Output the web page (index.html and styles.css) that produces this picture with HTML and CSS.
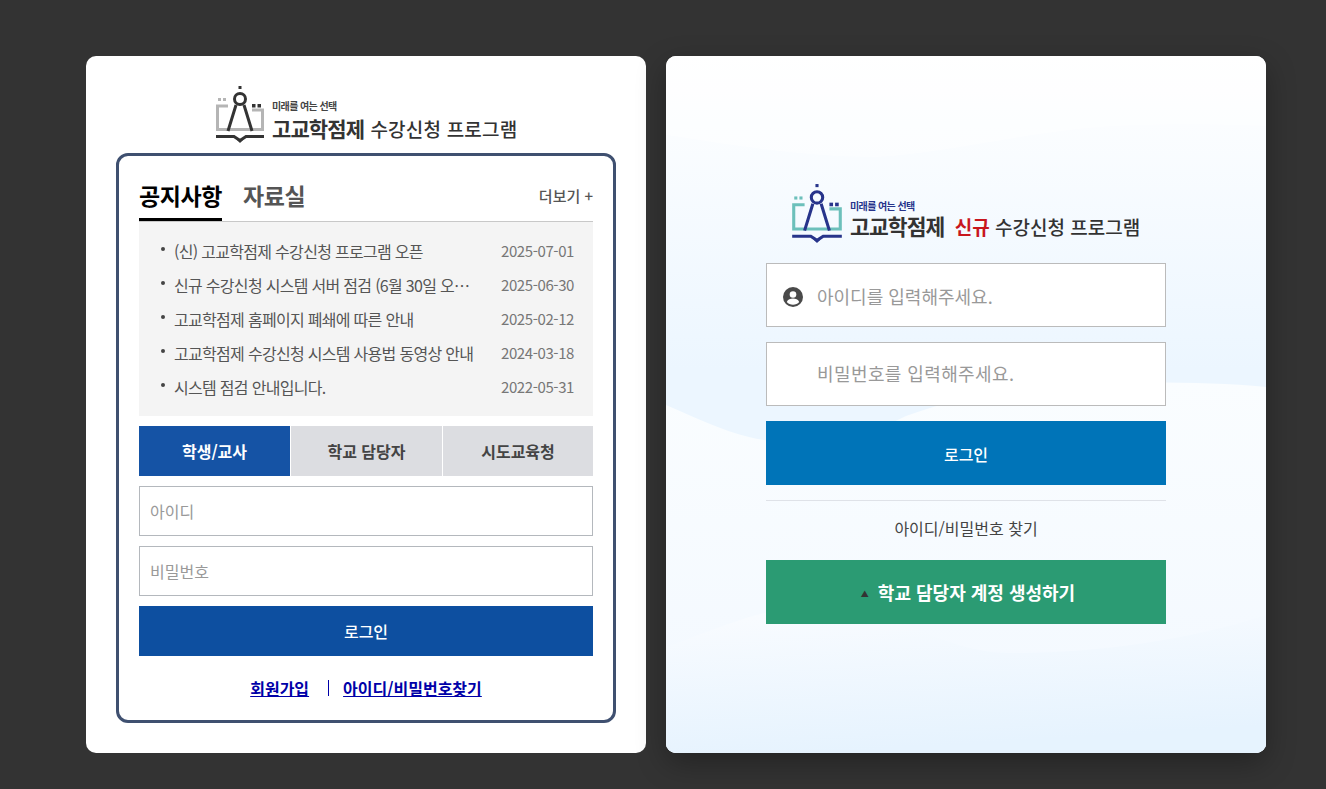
FILE: index.html
```html
<!DOCTYPE html>
<html lang="ko">
<head>
    <meta charset="UTF-8">
    <title>고교학점제 수강신청 프로그램</title>
    <link rel="stylesheet" href="styles.css">
</head>
<body>
    <div class="wrap">
        <div class="card card-left">
            <div class="logo logo-gray">
                <svg class="logo-mark" width="48" height="58" viewBox="0 0 48 58">
                    <g fill="#b5b5b5">
                        <rect x="2" y="13" width="3" height="3"/>
                        <rect x="7" y="13" width="3" height="3"/>
                    </g>
                    <path d="M12 21H1.500V44.500H46.500V25H36" fill="none" stroke="#b5b5b5" stroke-width="3"/>
                    <g fill="#333">
                        <rect x="22.500" y="1" width="3" height="3"/>
                        <rect x="36" y="19" width="3.500" height="3.500"/>
                        <rect x="41.500" y="19" width="3.500" height="3.500"/>
                    </g>
                    <circle cx="24" cy="14" r="5.500" fill="none" stroke="#333" stroke-width="3"/>
                    <path d="M20 20 12 46M28 20 36 46" fill="none" stroke="#333" stroke-width="3"/>
                    <path d="M0 51.500H18L24 55.500L30 51.500H48" fill="none" stroke="#333" stroke-width="3"/>
                    <path d="M20.500 54.500h7L24 58z" fill="#333"/>
                </svg>
                <div class="logo-text">
                    <div class="logo-sub">미래를 여는 선택</div>
                    <div class="logo-main"><b>고교학점제</b> <span>수강신청 프로그램</span></div>
                </div>
            </div>
            <div class="box">
                <div class="tabs">
                    <a class="tab on">공지사항</a>
                    <a class="tab">자료실</a>
                    <a class="more">더보기 +</a>
                </div>
                <ul class="notice">
                    <li><span class="subject">(신) 고교학점제 수강신청 프로그램 오픈</span><span class="date">2025-07-01</span></li>
                    <li><span class="subject">신규 수강신청 시스템 서버 점검 (6월 30일 오…</span><span class="date">2025-06-30</span></li>
                    <li><span class="subject">고교학점제 홈페이지 폐쇄에 따른 안내</span><span class="date">2025-02-12</span></li>
                    <li><span class="subject">고교학점제 수강신청 시스템 사용법 동영상 안내</span><span class="date">2024-03-18</span></li>
                    <li><span class="subject">시스템 점검 안내입니다.</span><span class="date">2022-05-31</span></li>
                </ul>
                <div class="roles">
                    <a class="role on">학생/교사</a>
                    <a class="role">학교 담당자</a>
                    <a class="role">시도교육청</a>
                </div>
                <input class="field" type="text" placeholder="아이디">
                <input class="field" type="password" placeholder="비밀번호">
                <button class="btn-login">로그인</button>
                <div class="links">
                    <a href="#">회원가입</a>
                    <i></i>
                    <a href="#">아이디/비밀번호찾기</a>
                </div>
            </div>
        </div>

        <div class="card card-right">
            <svg class="waves" width="600" height="697" viewBox="0 0 600 697">
                <defs>
                    <linearGradient id="waveBase" x1="0" y1="0" x2="0" y2="1">
                        <stop offset="0" stop-color="#fff"/>
                        <stop offset="0.45" stop-color="#ecf6ff"/>
                    </linearGradient>
                    <linearGradient id="waveMid" x1="0" y1="0" x2="0" y2="1">
                        <stop offset="0" stop-color="#fafdff"/>
                        <stop offset="1" stop-color="#f2f8ff"/>
                    </linearGradient>
                    <linearGradient id="waveLow" x1="0" y1="0" x2="0.25" y2="1">
                        <stop offset="0" stop-color="#fafcff"/>
                        <stop offset="1" stop-color="#e6f3fe"/>
                    </linearGradient>
                </defs>
                <rect width="600" height="697" fill="url(#waveBase)"/>
                <path d="M0 79C70 90 140 101 211 101C300 95 380 70 480 69C530 68 570 69 600 70V0H0z" fill="#fff" fill-opacity="0.4"/>
                <path d="M0 349C30 362 55 374 83 381C130 392 180 390 240 360C300 338 360 328 421 327C490 326 550 326 600 331V697H0z" fill="url(#waveMid)"/>
                <path d="M0 591C30 580 55 570 83 561C140 545 200 550 247 571C280 586 310 597 344 597C430 597 520 585 600 559V697H0z" fill="url(#waveLow)"/>
            </svg>
            <div class="right-inner">
                <div class="logo logo-color">
                    <svg class="logo-mark" width="50" height="60" viewBox="0 0 48 58">
                        <g fill="#6cc0bb">
                            <rect x="2" y="13" width="3" height="3"/>
                            <rect x="7" y="13" width="3" height="3"/>
                        </g>
                        <path d="M12 21H1.500V44.500H46.500V25H36" fill="none" stroke="#6cc0bb" stroke-width="3"/>
                        <g fill="#27348b">
                            <rect x="22.500" y="1" width="3" height="3"/>
                            <rect x="36" y="19" width="3.500" height="3.500"/>
                            <rect x="41.500" y="19" width="3.500" height="3.500"/>
                        </g>
                        <circle cx="24" cy="14" r="5.500" fill="none" stroke="#27348b" stroke-width="3"/>
                        <path d="M20 20 12 46M28 20 36 46" fill="none" stroke="#27348b" stroke-width="3"/>
                        <path d="M0 51.500H18L24 55.500L30 51.500H48" fill="none" stroke="#27348b" stroke-width="3"/>
                        <path d="M20.500 54.500h7L24 58z" fill="#27348b"/>
                    </svg>
                    <div class="logo-text">
                        <div class="logo-sub">미래를 여는 선택</div>
                        <div class="logo-main"><b>고교학점제</b> <em>신규</em> <span>수강신청 프로그램</span></div>
                    </div>
                </div>
                <div class="big-field">
                    <svg class="user-icon" width="20" height="20" viewBox="0 0 20 20">
                        <circle cx="10" cy="10" r="10" fill="#4a4a4a"/>
                        <circle cx="10" cy="7.500" r="3.300" fill="#fff"/>
                        <path d="M3.800 15c1-2.400 3.600-3.400 6.200-3.400s5.200 1 6.200 3.400c-1.500 1.700-3.700 2.700-6.200 2.700s-4.700-1-6.200-2.700z" fill="#fff"/>
                    </svg>
                    <input class="id" type="text" placeholder="아이디를 입력해주세요.">
                </div>
                <div class="big-field">
                    <input class="pw" type="password" placeholder="비밀번호를 입력해주세요.">
                </div>
                <button class="btn-big">로그인</button>
                <div class="line"></div>
                <a class="find">아이디/비밀번호 찾기</a>
                <button class="btn-create"><span class="tri">▲</span>학교 담당자 계정 생성하기</button>
            </div>
        </div>
    </div>
</body>
</html>
```

FILE: styles.css
```css
* {
    box-sizing: border-box;
}

body {
    margin: 0;
    height: 789px;
    overflow: hidden;
    background-color: #333;
    font-family: "Noto Sans CJK KR", "Noto Sans", sans-serif;
    color: #333;
}

.wrap {
    display: flex;
    gap: 20px;
    padding: 56px 0 0 86px;
}

.card {
    height: 697px;
    border-radius: 10px;
}

.card-left {
    width: 560px;
    padding: 29px 30px 0;
    background: #fff;
}

.card-right {
    position: relative;
    width: 600px;
    overflow: hidden;
    background: #f5faff;
    box-shadow: 0 10px 30px rgba(0, 0, 0, 0.3);
}

.waves {
    position: absolute;
    top: 0;
    left: 0;
}

.right-inner {
    position: relative;
    display: flex;
    flex-direction: column;
    width: 400px;
    margin: 0 auto;
    padding-top: 127px;
}

/* logo */
.logo {
    display: flex;
    align-items: flex-start;
}

.logo-gray {
    height: 68px;
    padding-left: 100px;
}

.logo-color {
    height: 80px;
    padding-left: 26px;
}

.logo-mark {
    flex: none;
}

.logo-text {
    margin-left: 8px;
    padding-top: 13px;
    white-space: nowrap;
}

.logo-color .logo-text {
    padding-top: 16px;
}

.logo-sub {
    font-size: 10px;
    line-height: 16px;
    font-weight: 700;
    letter-spacing: -0.6px;
    color: #444;
}

.logo-color .logo-sub {
    line-height: 14px;
    color: #27348b;
}

.logo-main {
    margin-top: 1px;
    font-size: 19px;
    line-height: 26px;
    color: #333;
}

.logo-color .logo-main {
    margin-top: 0;
}

.logo-main b {
    font-size: 21px;
    font-weight: 700;
    letter-spacing: -0.9px;
}

.logo-color .logo-main b {
    font-size: 21.500px;
}

.logo-main span {
    margin-left: 1px;
    font-weight: 500;
    letter-spacing: 0.2px;
}

.logo-color .logo-main span {
    margin-left: 0;
    letter-spacing: 0;
}

.logo-main em {
    font-style: normal;
    font-weight: 700;
    color: #c8161d;
    margin-left: 5px;
}

/* notice box */
.box {
    width: 500px;
    height: 570px;
    padding: 20px;
    border: 3px solid #3f5070;
    border-radius: 12px;
}

.tabs {
    display: flex;
    align-items: flex-end;
    height: 46px;
    border-bottom: 1px solid #c8c8c8;
}

.tab {
    height: 46px;
    margin-right: 21px;
    font-size: 23px;
    line-height: 41px;
    font-weight: 700;
    letter-spacing: -0.4px;
    color: #555;
}

.tab.on {
    border-bottom: 3px solid #000;
    color: #000;
}

.more {
    margin-left: auto;
    height: 46px;
    font-size: 15px;
    line-height: 41px;
    font-weight: 500;
    color: #555;
}

.notice {
    height: 194px;
    margin: 0 0 10px;
    padding: 12px 19px 0 21px;
    list-style: none;
    background: #f4f4f4;
}

.notice li {
    position: relative;
    display: flex;
    justify-content: space-between;
    height: 34px;
    padding-left: 14px;
    font-size: 16px;
    line-height: 34px;
    letter-spacing: -0.7px;
    color: #555;
}

.notice li::before {
    content: "";
    position: absolute;
    left: 1px;
    top: 13px;
    width: 4px;
    height: 4px;
    border-radius: 50%;
    background: #444;
}

.subject {
    width: 310px;
    white-space: nowrap;
}

.date {
    font-size: 15px;
    letter-spacing: -0.4px;
    color: #777;
}

.roles {
    display: grid;
    grid-template-columns: 151px 151px 150px;
    gap: 1px;
    height: 50px;
    margin-bottom: 10px;
}

.role {
    background: #dcdde1;
    font-size: 16px;
    line-height: 50px;
    font-weight: 700;
    text-align: center;
    color: #444;
}

.role.on {
    background: #1553a5;
    color: #fff;
}

.field {
    display: block;
    width: 100%;
    height: 50px;
    margin-bottom: 10px;
    padding: 0 10px;
    border: 1px solid #b4b8bd;
    background: #fff;
    font-family: inherit;
    font-size: 16px;
}

.field::placeholder {
    color: #999;
}

.btn-login {
    display: block;
    width: 100%;
    height: 50px;
    border: 0;
    background: #0d4fa0;
    color: #fff;
    font-family: inherit;
    font-size: 16px;
    font-weight: 500;
}

.links {
    display: flex;
    justify-content: center;
    align-items: center;
    margin-top: 21px;
    font-size: 16px;
    line-height: 22px;
    font-weight: 700;
}

.links a {
    color: #0000a8;
}

.links i {
    width: 1px;
    height: 16px;
    margin: 0 14px 0 19px;
    background: #0000a8;
}

/* right card form */
.big-field {
    display: flex;
    align-items: center;
    height: 64px;
    margin-bottom: 15px;
    padding-left: 16px;
    border: 1px solid #bbb;
    background: #fff;
}

.user-icon {
    flex: none;
    margin: 4px 14px 0 0;
}

.big-field input {
    flex: 1;
    height: 40px;
    padding: 0;
    border: 0;
    outline: 0;
    background: none;
    font-family: inherit;
    font-size: 18px;
}

.big-field input::placeholder {
    color: #999;
}

.big-field .id {
    padding-top: 2px;
}

.big-field .pw {
    margin-left: 34px;
    padding-bottom: 2px;
    letter-spacing: 0.4px;
}

.btn-big {
    height: 64px;
    padding-top: 2px;
    border: 0;
    background: #0074b8;
    color: #fff;
    font-family: inherit;
    font-size: 16px;
    font-weight: 500;
}

.line {
    height: 1px;
    margin-top: 15px;
    background: #dfe2e8;
}

.find {
    height: 59px;
    font-size: 16px;
    line-height: 54px;
    text-align: center;
    color: #444;
}

.btn-create {
    height: 64px;
    padding-left: 10px;
    border: 0;
    background: #2b9b73;
    color: #fff;
    font-family: inherit;
    font-size: 18px;
    font-weight: 700;
}

.tri {
    margin-right: 9px;
    font-size: 8px;
    vertical-align: 3px;
    color: #333;
}
```
